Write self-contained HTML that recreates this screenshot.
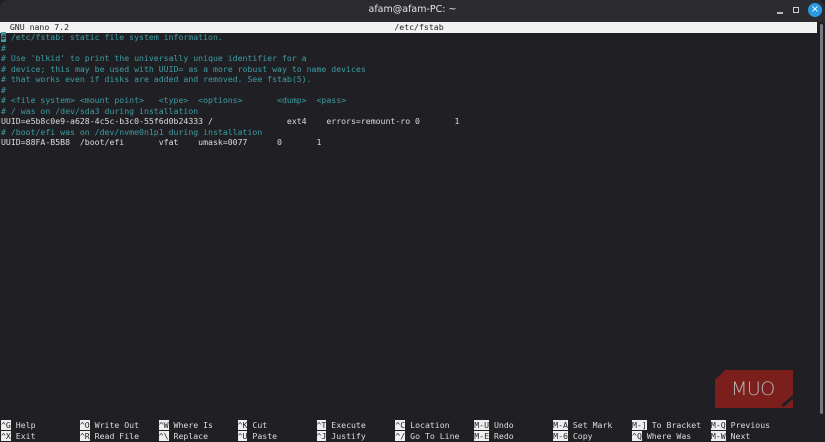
<!DOCTYPE html>
<html><head><meta charset="utf-8"><style>
*{margin:0;padding:0;box-sizing:border-box}
body{width:825px;height:442px;background:#202024;overflow:hidden;position:relative;font-family:"DejaVu Sans Mono","Liberation Mono",monospace;}
#title{position:absolute;left:0;top:0;width:825px;height:22px;background:#2b2b30;border-radius:8px 8px 0 0;color:#e6e6e6;font:9.5px "DejaVu Sans",sans-serif;text-align:center;line-height:20px}
#title span{position:absolute;left:0;right:0}
.wb{position:absolute;top:6px}
#hdr{position:absolute;left:0;top:22px;width:817px;height:11px;background:#f2f2f2;color:#222;font-size:8.2px;line-height:11px;white-space:pre}
.ln{position:absolute;left:1px;font-size:8.2px;line-height:10.5px;white-space:pre;color:#dcdcdc}
.c{color:#3c9ca2}
.k{background:#efefef;color:#222}
#sb{position:absolute;right:2px;top:24px;width:3px;height:390px;background:#7a7a7e;border-radius:2px}
</style></head><body>
<div id="title"><span>afam@afam-PC: ~</span>
<div class="wb" style="left:777px;top:12px;width:6px;height:1.5px;background:#bbb"></div>
<div class="wb" style="left:793px;top:7px;width:6px;height:6px;border:1.3px solid #ccc"></div>
<div class="wb" style="left:808px;top:3px;width:14px;height:14px;border-radius:50%;background:#2a9ae0;color:#fff;font-size:10px;line-height:14px;text-align:center">×</div>
</div>
<div id="hdr">  GNU nano 7.2                                                                  /etc/fstab</div>
<div class="ln c" style="top:32px"><span style="background:#3c9ca2;color:#202024">#</span> /etc/fstab: static file system information.</div>
<div class="ln c" style="top:42.5px">#</div>
<div class="ln c" style="top:53px"># Use 'blkid' to print the universally unique identifier for a</div>
<div class="ln c" style="top:63.5px"># device; this may be used with UUID= as a more robust way to name devices</div>
<div class="ln c" style="top:74px"># that works even if disks are added and removed. See fstab(5).</div>
<div class="ln c" style="top:84.5px">#</div>
<div class="ln c" style="top:95px"># &lt;file system&gt; &lt;mount point&gt;   &lt;type&gt;  &lt;options&gt;       &lt;dump&gt;  &lt;pass&gt;</div>
<div class="ln c" style="top:105.5px"># / was on /dev/sda3 during installation</div>
<div class="ln" style="top:116px">UUID=e5b8c0e9-a628-4c5c-b3c0-55f6d0b24333 /               ext4    errors=remount-ro 0       1</div>
<div class="ln c" style="top:126.5px"># /boot/efi was on /dev/nvme0n1p1 during installation</div>
<div class="ln" style="top:137px">UUID=88FA-B5B8  /boot/efi       vfat    umask=0077      0       1</div>
<div style="position:absolute;left:715px;top:370px;width:78px;height:38px;background:#7a1f1c;clip-path:polygon(10px 0,100% 0,100% 100%,0 100%,0 10px)"></div>
<div style="position:absolute;left:780px;top:398px;width:20px;height:3px;background:#202024;transform:rotate(-40deg)"></div>
<div style="position:absolute;left:731px;top:378px;color:#b8b8b8;font:19px 'DejaVu Sans',sans-serif;font-weight:200;letter-spacing:-0.5px">MUO</div>
<div class="ln" style="top:420px"><span class="k">^G</span> Help         <span class="k">^O</span> Write Out    <span class="k">^W</span> Where Is     <span class="k">^K</span> Cut          <span class="k">^T</span> Execute      <span class="k">^C</span> Location     <span class="k">M-U</span> Undo        <span class="k">M-A</span> Set Mark    <span class="k">M-]</span> To Bracket  <span class="k">M-Q</span> Previous</div>
<div class="ln" style="top:430.5px"><span class="k">^X</span> Exit         <span class="k">^R</span> Read File    <span class="k">^\</span> Replace      <span class="k">^U</span> Paste        <span class="k">^J</span> Justify      <span class="k">^/</span> Go To Line   <span class="k">M-E</span> Redo        <span class="k">M-6</span> Copy        <span class="k">^Q</span> Where Was    <span class="k">M-W</span> Next</div>
<div id="sb"></div>
</body></html>
